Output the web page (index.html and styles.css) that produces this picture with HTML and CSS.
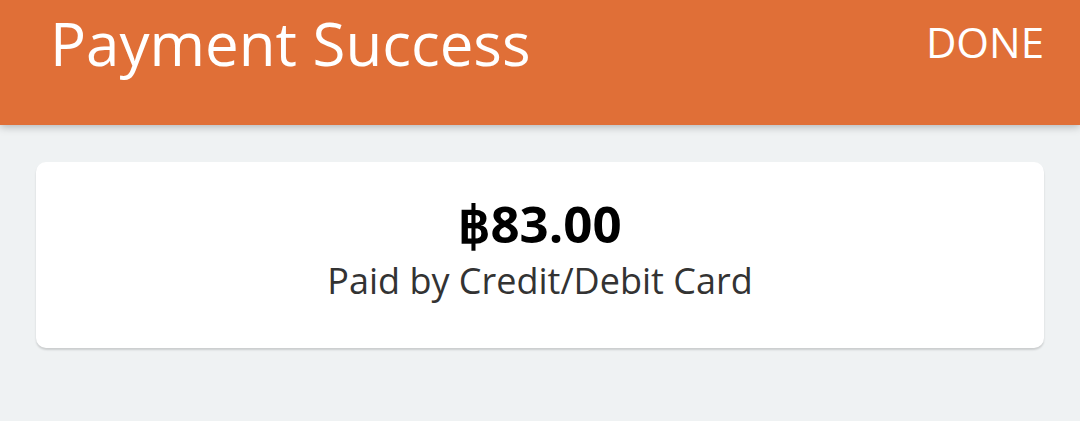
FILE: index.html
```html
<!DOCTYPE html>
<html>
<head>
<meta charset="utf-8">
<link rel="stylesheet" href="styles.css">
</head>
<body>
<header class="appbar">
  <h1 class="title">Payment Success</h1>
  <span class="done">DONE</span>
</header>
<main class="content">
  <section class="card">
    <div class="amount">฿83.00</div>
    <div class="method">Paid by Credit/Debit Card</div>
  </section>
</main>
</body>
</html>
```

FILE: styles.css
```css
html, body {
  margin: 0;
  padding: 0;
}
body {
  width: 1080px;
  height: 421px;
  overflow: hidden;
  background: #eff2f3;
  font-family: "Open Sans", "Noto Sans", sans-serif;
}
.appbar {
  height: 125px;
  background: #e06f37;
  box-shadow: 0 2px 8px rgba(0,0,0,0.25);
  display: flex;
  align-items: flex-start;
  justify-content: space-between;
  padding: 0 36px 0 50px;
  box-sizing: border-box;
  position: relative;
  z-index: 1;
}
.title {
  margin: 0;
  margin-top: 3px;
  font-size: 60px;
  font-weight: 400;
  color: #fff;
  line-height: 80px;
}
.done {
  margin-top: 10px;
  font-size: 42px;
  color: #fff;
  line-height: 64px;
}
.content {
  padding: 37px 36px 0 36px;
}
.card {
  background: #fff;
  border-radius: 10px;
  height: 186px;
  box-shadow: 0 2px 2px rgba(0,0,0,0.15);
  display: flex;
  flex-direction: column;
  align-items: center;
  box-sizing: border-box;
  padding-top: 28px;
}
.amount {
  font-size: 51px;
  font-weight: 700;
  color: #000;
  line-height: 66px;
}
.method {
  font-size: 36px;
  color: #333;
  line-height: 50px;
}
```
